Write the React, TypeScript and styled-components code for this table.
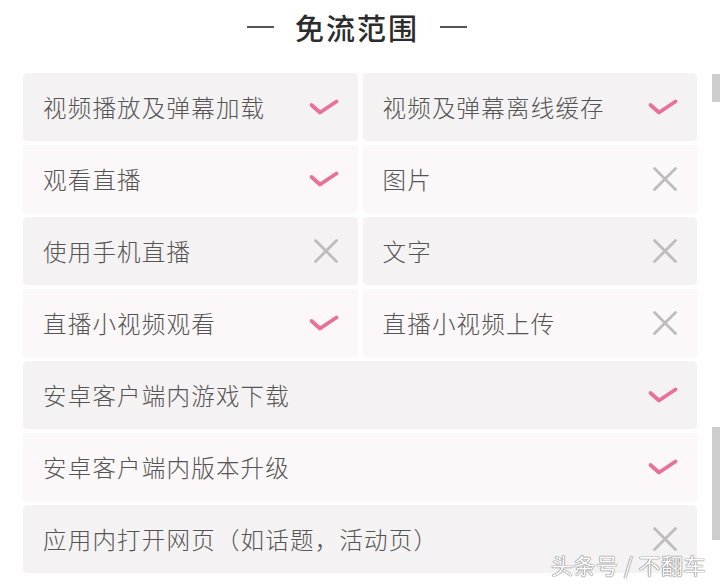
import React from 'react';
import styled, { createGlobalStyle } from 'styled-components';

interface Item {
  label: string;
  ok: boolean;
}

const rows: Item[][] = [
  [{ label: '视频播放及弹幕加载', ok: true }, { label: '视频及弹幕离线缓存', ok: true }],
  [{ label: '观看直播', ok: true }, { label: '图片', ok: false }],
  [{ label: '使用手机直播', ok: false }, { label: '文字', ok: false }],
  [{ label: '直播小视频观看', ok: true }, { label: '直播小视频上传', ok: false }],
  [{ label: '安卓客户端内游戏下载', ok: true }],
  [{ label: '安卓客户端内版本升级', ok: true }],
  [{ label: '应用内打开网页（如话题，活动页）', ok: false }],
];

const Check = () => (
  <IconBox viewBox="0 0 32 20" width={32} height={20}>
    <path d="M3.5 8 L12 15.5 L28.5 4.5" fill="none" stroke="#e8709a" strokeWidth="3.8" strokeLinecap="round" strokeLinejoin="round" />
  </IconBox>
);

const Cross = () => (
  <IconBox viewBox="0 0 28 28" width={28} height={28}>
    <path d="M3.5 3.5 L24.5 24.5 M24.5 3.5 L3.5 24.5" fill="none" stroke="#bdbdbd" strokeWidth="2.8" strokeLinecap="round" />
  </IconBox>
);

const App = () => (
  <>
    <GlobalStyle />
    <Page>
      <Title>
        <Dash />
        <h1>免流范围</h1>
        <Dash />
      </Title>
      <Table>
        {rows.map((row, i) => (
          <Row key={i}>
            {row.map((item) => (
              <Cell key={item.label} shaded={i % 2 === 0}>
                <span>{item.label}</span>
                {item.ok ? <Check /> : <Cross />}
              </Cell>
            ))}
          </Row>
        ))}
      </Table>
      <ScrollThumb top={74} height={28} />
      <ScrollThumb top={427} height={113} />
      <Watermark>头条号 / 不翻车</Watermark>
    </Page>
  </>
);

const GlobalStyle = createGlobalStyle`
  body {
    margin: 0;
    background: #fff;
    font-family: "Noto Sans CJK SC", "Noto Sans", sans-serif;
  }
`;

const Page = styled.div`
  position: relative;
  width: 720px;
  height: 585px;
  overflow: hidden;
  background: #fff;
`;

const Title = styled.div`
  display: flex;
  align-items: center;
  justify-content: center;
  gap: 21px;
  height: 54px;
  padding-right: 6px;

  h1 {
    margin: 0;
    font-size: 29px;
    font-weight: 500;
    color: #2c2c2c;
    letter-spacing: 2px;
  }
`;

const Dash = styled.span`
  width: 27px;
  height: 1.5px;
  background: #555;
`;

const Table = styled.div`
  display: flex;
  flex-direction: column;
  gap: 4px;
  padding: 19px 23px 0 23px;
`;

const Row = styled.div`
  display: flex;
  gap: 5px;
`;

const Cell = styled.div<{ shaded: boolean }>`
  flex: 1;
  height: 68px;
  box-sizing: border-box;
  display: flex;
  align-items: center;
  justify-content: space-between;
  padding: 0 18px 0 20px;
  border-radius: 4px;
  background: ${(p) => (p.shaded ? '#f5f2f3' : '#fcf7f8')};
  font-size: 23.5px;
  font-weight: 300;
  letter-spacing: 1.2px;
  color: #555;
`;

const IconBox = styled.svg`
  flex-shrink: 0;
`;

const ScrollThumb = styled.div<{ top: number; height: number }>`
  position: absolute;
  right: 0;
  width: 8px;
  top: ${(p) => p.top}px;
  height: ${(p) => p.height}px;
  background: #cdcdcd;
`;

const Watermark = styled.div`
  position: absolute;
  right: 14px;
  bottom: 5px;
  font-size: 22px;
  letter-spacing: 0.5px;
  color: #fff;
  text-shadow: 0 0 1px #777, 0 0 1px #777, 0 0 1px #777;
`;

export default App;
